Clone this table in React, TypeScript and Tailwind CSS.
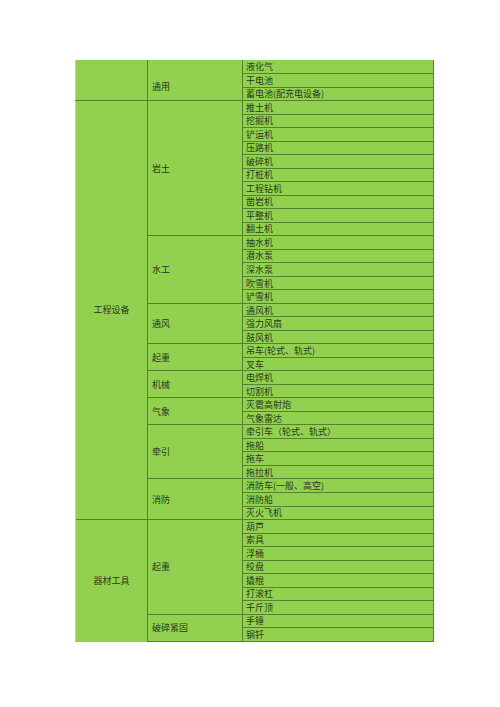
const groups: { cat: string; sub: string; items: string[] }[] = [
  { cat: "", sub: "通用", items: ["液化气", "干电池", "蓄电池(配充电设备)"] },
  {
    cat: "工程设备",
    sub: "岩土",
    items: ["推土机", "挖掘机", "铲运机", "压路机", "破碎机", "打桩机", "工程钻机", "凿岩机", "平整机", "翻土机"],
  },
  { cat: "工程设备", sub: "水工", items: ["抽水机", "潜水泵", "深水泵", "吹雪机", "铲雪机"] },
  { cat: "工程设备", sub: "通风", items: ["通风机", "强力风扇", "鼓风机"] },
  { cat: "工程设备", sub: "起重", items: ["吊车(轮式、轨式)", "叉车"] },
  { cat: "工程设备", sub: "机械", items: ["电焊机", "切割机"] },
  { cat: "工程设备", sub: "气象", items: ["灭雹高射炮", "气象雷达"] },
  { cat: "工程设备", sub: "牵引", items: ["牵引车（轮式、轨式）", "拖船", "拖车", "拖拉机"] },
  { cat: "工程设备", sub: "消防", items: ["消防车(一般、高空)", "消防船", "灭火飞机"] },
  { cat: "器材工具", sub: "起重", items: ["葫芦", "索具", "浮桶", "绞盘", "撬棍", "打滚杠", "千斤顶"] },
  { cat: "器材工具", sub: "破碎紧固", items: ["手锤", "钢钎"] },
];

// how many rows each first-column cell covers
const catSpan = (gi: number) => {
  if (gi === 0) return 3;
  const cat = groups[gi].cat;
  if (groups[gi - 1].cat === cat) return 0;
  let n = 0;
  for (let i = gi; i < groups.length && groups[i].cat === cat; i++) n += groups[i].items.length;
  return n;
};

const line = "border-[#55832c]";

export default function App() {
  return (
    <div className="min-h-[707px] bg-white pt-[60px] pl-[75px] font-['Noto_Sans_CJK_SC',sans-serif] text-[9px] text-[#2a3a1c]">
      <table className="w-[358px] table-fixed border-collapse bg-[#92d050]">
        <colgroup>
          <col className="w-[72px]" />
          <col className="w-[95px]" />
          <col className="w-[191px]" />
        </colgroup>
        <tbody>
          {groups.map((g, gi) =>
            g.items.map((item, ii) => {
              const span = catSpan(gi);
              const isFirst = gi === 0;
              return (
                <tr key={`${gi}-${ii}`} className="h-[13.53px]">
                  {ii === 0 && span > 0 && (
                    <td
                      rowSpan={span}
                      className={`border-l border-l-[#c4d9a4] border-r ${line} p-0 text-center align-middle ${
                        isFirst ? "border-b" : ""
                      } ${g.cat === "器材工具" ? "border-t" : ""}`}
                    >
                      {g.cat}
                    </td>
                  )}
                  {isFirst && ii === 0 && <td className={`border-r ${line} p-0`}></td>}
                  {isFirst && ii === 1 && (
                    <td rowSpan={2} className={`border-r border-b ${line} py-0 pr-0 pl-[4px] align-middle leading-none`}>
                      {g.sub}
                    </td>
                  )}
                  {!isFirst && ii === 0 && (
                    <td
                      rowSpan={g.items.length}
                      className={`border ${line} py-0 pr-0 pl-[4px] align-middle leading-none`}
                    >
                      {g.sub}
                    </td>
                  )}
                  <td
                    className={`border-r border-b ${line} ${ii === 0 && !isFirst ? "border-t" : ""} py-0 pr-0 pl-[3px] leading-none whitespace-nowrap`}
                  >
                    {item}
                  </td>
                </tr>
              );
            })
          )}
        </tbody>
      </table>
    </div>
  );
}
